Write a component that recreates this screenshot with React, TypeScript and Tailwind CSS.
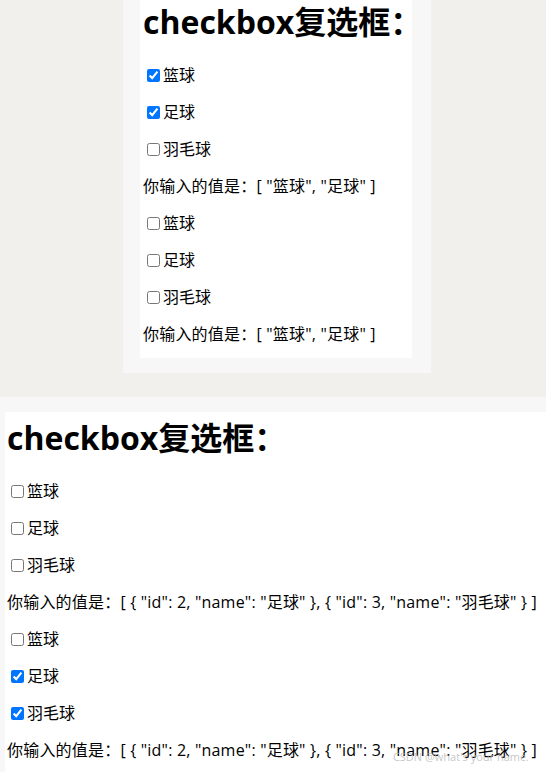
import React from 'react';

const font = { fontFamily: '"Open Sans", "Noto Sans CJK SC", sans-serif' };

type Item = { id: number; name: string };

const sports: Item[] = [
  { id: 1, name: '篮球' },
  { id: 2, name: '足球' },
  { id: 3, name: '羽毛球' },
];

function CheckRow({ label, checked }: { label: string; checked: boolean }) {
  return (
    <div className="flex h-[21px] items-center mt-[16px] first:mt-0">
      <input
        type="checkbox"
        defaultChecked={checked}
        className="ml-[4px] mr-[3px] h-[13px] w-[13px] accent-[#0075ff]"
      />
      <span className="text-[16px] leading-[21px] text-black">{label}</span>
    </div>
  );
}

function Result({ text }: { text: string }) {
  return (
    <p className="mt-[16px] h-[21px] text-[16px] leading-[21px] tracking-[0.2px] whitespace-nowrap text-black">
      你输入的值是：{text}
    </p>
  );
}

function Demo({ picked, text }: { picked: number[][]; text: string }) {
  return (
    <>
      <h1 className="h-[42px] text-[32px] font-bold leading-[42px] whitespace-nowrap text-black">
        checkbox复选框：
      </h1>
      <div className="pt-[22px]">
        {picked.map((group, gi) => (
          <React.Fragment key={gi}>
            {sports.map((s) => (
              <CheckRow key={s.id} label={s.name} checked={group.includes(s.id)} />
            ))}
            <Result text={text} />
          </React.Fragment>
        ))}
      </div>
    </>
  );
}

export default function App() {
  const objText = '[ { "id": 2, "name": "足球" }, { "id": 3, "name": "羽毛球" } ]';
  return (
    <div className="relative w-[546px] h-[772px] overflow-hidden bg-[#f7f7f7]" style={font}>
      <div className="bg-[#f1f0ec] pb-[24px]">
        <div className="ml-[123px] w-[308px] bg-[#f7f7f7] pb-[15px]">
          <div className="ml-[17px] w-[272px] bg-white pl-[3px] pt-[1px] pb-[13px]">
            <Demo picked={[[1, 2], []]} text={'[ "篮球", "足球" ]'} />
          </div>
        </div>
      </div>
      <div className="mt-[15px] ml-[5px] bg-white pl-[2px] pt-[5px] pb-[40px]">
        <Demo picked={[[], [2, 3]]} text={objText} />
      </div>
      <span className="absolute right-[17px] bottom-[7px] text-[11px] text-[#b8b8b8]/80">
        CSDN @what's your name.
      </span>
    </div>
  );
}
